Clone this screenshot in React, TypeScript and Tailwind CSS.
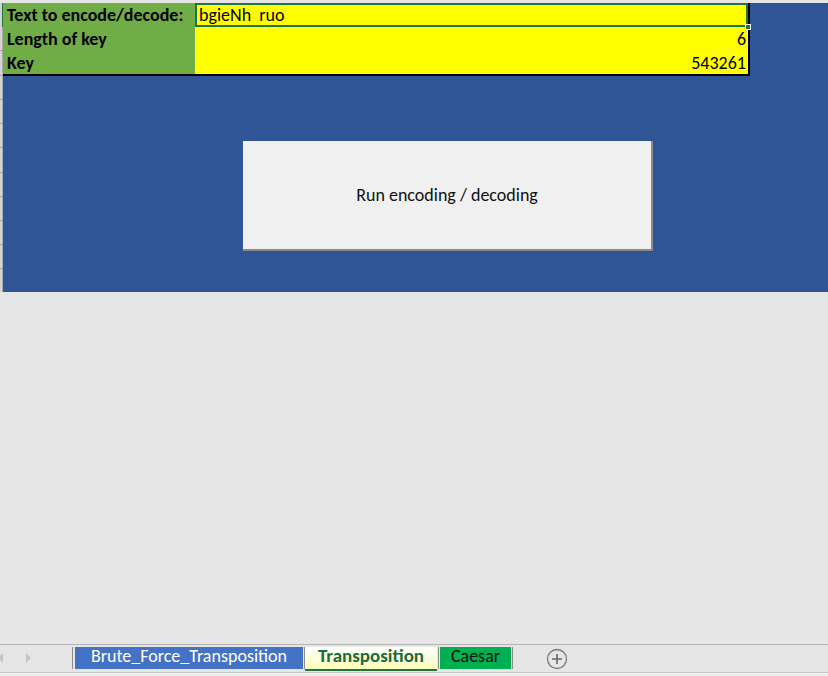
import React from "react";

const font = { fontFamily: "Calibri, Carlito, 'Liberation Sans', Arial, sans-serif" };

export default function App() {
  const ticks = [50, 75, 99, 123, 147, 172, 196, 220, 244, 268];
  return (
    <div className="w-[828px] h-[676px] bg-[#e6e6e6] flex flex-col overflow-hidden" style={font}>
      {/* sheet area */}
      <div className="h-[644px] flex flex-col">
        <div className="h-[3px] bg-[#e6e6e6]" />
        <div className="flex h-[289px]">
          {/* row header strip */}
          <div className="relative w-[3px] bg-[#d4d4d4] border-r border-[#ababab]">
            {ticks.map((t) => (
              <div key={t} className="absolute left-0 w-[3px] h-px bg-[#9a9a9a]" style={{ top: t - 3 }} />
            ))}
            <div className="absolute left-[2px] top-0 w-[2px] h-[24px] bg-[#217346]" />
          </div>
          <div className="relative flex-1 bg-[#2f5597] flex flex-col">
            {/* cells */}
            <div className="flex flex-col w-[747px] border-b-2 border-r-2 border-black">
              <div className="flex h-[24px]">
                <div className="w-[192px] bg-[#70ad47] pl-[4px] pt-[1px] flex items-center text-[18px] font-bold text-black whitespace-nowrap">
                  Text to encode/decode:
                </div>
                <div className="relative flex-1 bg-[#ffff00] border-2 border-[#217346] flex items-center pl-[2px] pt-[1px] text-[18px] text-black">
                  bgieNh&nbsp;&nbsp;ruo
                  <div className="absolute right-[-5px] bottom-[-5px] w-[6px] h-[6px] bg-[#217346] border border-white" />
                </div>
              </div>
              <div className="flex h-[24px]">
                <div className="w-[192px] bg-[#70ad47] pl-[4px] pt-[1px] flex items-center text-[18px] font-bold text-black">
                  Length of key
                </div>
                <div className="flex-1 bg-[#ffff00] flex items-center justify-end pr-[2px] pt-[1px] text-[18px] text-black">6</div>
              </div>
              <div className="flex h-[23px]">
                <div className="w-[192px] bg-[#70ad47] pl-[4px] pt-[1px] flex items-center text-[18px] font-bold text-black">
                  Key
                </div>
                <div className="flex-1 bg-[#ffff00] flex items-center justify-end pr-[2px] pt-[1px] text-[18px] text-black">543261</div>
              </div>
            </div>
            {/* button */}
            <div className="pl-[240px] pt-[65px]">
              <div className="w-[410px] h-[110px] bg-[#f0f0f0] border-r-2 border-b-2 border-[#8a8a8a] flex items-center justify-center text-[18px] text-[#111]">
                Run encoding / decoding
              </div>
            </div>
          </div>
        </div>
        <div className="flex-1 bg-[#e6e6e6]" />
      </div>
      {/* tab bar */}
      <div className="h-[29px] border-t border-[#b4b4b4] border-b border-b-[#c8c8c8] bg-[#e6e6e6] flex items-start pt-[2px]">
        <div className="w-[72px] h-[22px] flex items-center relative">
          <svg width="6" height="10" className="absolute left-[-2px] top-[6px]"><path d="M5 0 L0 5 L5 10 Z" fill="#c4c4c4" /></svg>
          <svg width="6" height="10" className="absolute left-[26px] top-[6px]"><path d="M0 0 L5 5 L0 10 Z" fill="#c4c4c4" /></svg>
        </div>
        <div className="w-px h-[22px] bg-[#8c8c8c]" />
        <div className="ml-[2px] w-[228px] h-[22px] pb-[3px] bg-[#4472c4] text-white text-[18px] flex items-center justify-center">
          Brute_Force_Transposition
        </div>
        <div className="w-px h-[22px] bg-[#8c8c8c] ml-[1px]" />
        <div className="w-[132px] h-[24px] pb-[3px] bg-gradient-to-b from-white to-[#ffffb8] border-b-2 border-[#217346] text-[#1e6b3a] font-bold text-[19px] flex items-center justify-center">
          Transposition
        </div>
        <div className="w-px h-[22px] bg-[#8c8c8c] ml-[1px]" />
        <div className="ml-[1px] w-[71px] h-[22px] pb-[3px] bg-[#00b050] text-[#111] text-[18px] flex items-center justify-center">
          Caesar
        </div>
        <div className="w-px h-[22px] bg-[#8c8c8c] ml-[1px]" />
        <div className="ml-[33px] mt-[1px]">
          <svg width="22" height="22" viewBox="0 0 22 22">
            <circle cx="11" cy="11" r="9.5" fill="none" stroke="#7a7a7a" strokeWidth="1.3" />
            <path d="M11 6 V16 M6 11 H16" stroke="#6a6a6a" strokeWidth="1.6" />
          </svg>
        </div>
      </div>
      <div className="flex-1 bg-[#f0f0f0]" />
    </div>
  );
}
